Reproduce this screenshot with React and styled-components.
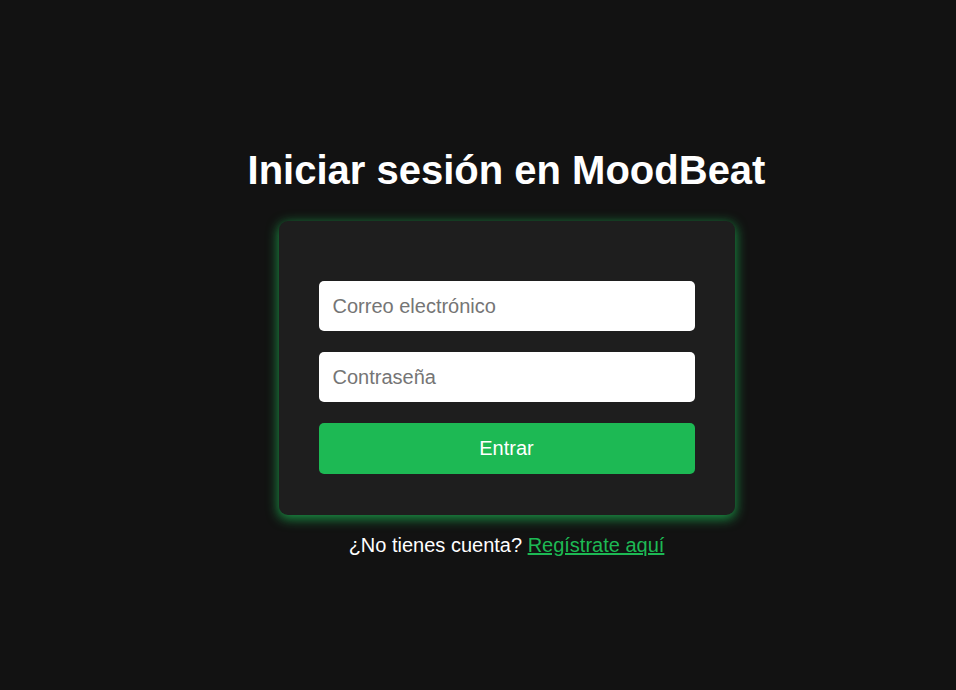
import React, { useState } from 'react';
import styled, { createGlobalStyle } from 'styled-components';

const GlobalStyle = createGlobalStyle`
  body {
    margin: 0;
    background-color: #121212;
    font-family: "Liberation Sans", Arial, sans-serif;
    color: #ffffff;
  }
`;

const Page = styled.div`
  min-height: 100vh;
  display: flex;
  flex-direction: column;
  align-items: center;
  padding: 147px 0 0 57px;
  box-sizing: border-box;
`;

const Title = styled.h1`
  margin: 0 0 28px;
  font-size: 40px;
  line-height: 46px;
  font-weight: bold;
  color: #ffffff;
`;

const Card = styled.form`
  width: 456px;
  box-sizing: border-box;
  padding: 60px 40px 41px;
  background-color: #1e1e1e;
  border-radius: 9px;
  box-shadow: 0 3px 12px 1px rgba(29, 185, 84, 0.75);
  display: flex;
  flex-direction: column;
  gap: 21px;
`;

const Input = styled.input`
  height: 50px;
  box-sizing: border-box;
  padding: 0 14px;
  border: none;
  border-radius: 5px;
  background-color: #ffffff;
  font-family: "Liberation Sans", Arial, sans-serif;
  font-size: 20px;
  color: #222;
  outline: none;

  &::placeholder {
    color: #757575;
  }
`;

const Button = styled.button`
  height: 51px;
  border: none;
  border-radius: 5px;
  background-color: #1db954;
  color: #ffffff;
  font-family: "Liberation Sans", Arial, sans-serif;
  font-size: 20px;
  cursor: pointer;
`;

const Footer = styled.p`
  margin: 19px 0 0;
  font-size: 20px;
  line-height: 23px;
  color: #ffffff;
`;

const Link = styled.a`
  color: #1db954;
  text-decoration: underline;
`;

const App = () => {
  const [email, setEmail] = useState('');
  const [password, setPassword] = useState('');

  return (
    <>
      <GlobalStyle />
      <Page>
        <Title>Iniciar sesión en MoodBeat</Title>
        <Card onSubmit={(e) => e.preventDefault()}>
          <Input
            type="email"
            placeholder="Correo electrónico"
            value={email}
            onChange={(e) => setEmail(e.target.value)}
          />
          <Input
            type="password"
            placeholder="Contraseña"
            value={password}
            onChange={(e) => setPassword(e.target.value)}
          />
          <Button type="submit">Entrar</Button>
        </Card>
        <Footer>
          ¿No tienes cuenta? <Link href="#">Regístrate aquí</Link>
        </Footer>
      </Page>
    </>
  );
};

export default App;
